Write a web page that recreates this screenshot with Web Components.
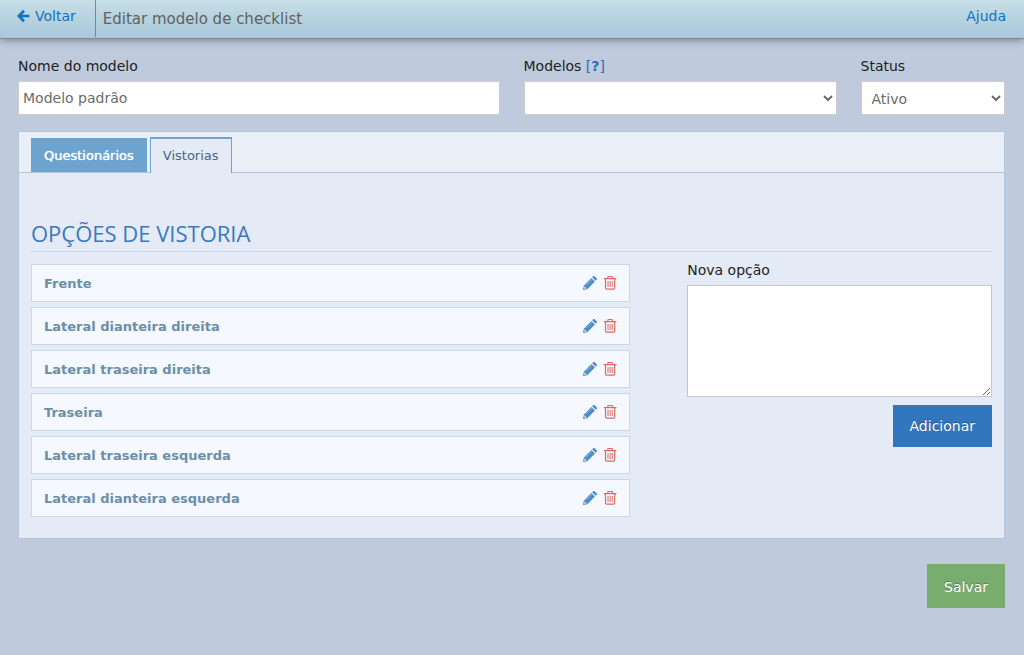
<!DOCTYPE html>
<html lang="pt-BR">
<head>
<meta charset="utf-8">
<title>Editar modelo de checklist</title>
<style>
  html { min-height: 100%; background: #bfcbdd; }
  body { margin: 0; font: 14px/20px "DejaVu Sans", Verdana, sans-serif; color: #222; }
</style>
</head>
<body>
<checklist-page></checklist-page>

<template id="t-topbar">
  <style>
    :host { display: flex; height: 38px; border-bottom: 1px solid #83898d; background: linear-gradient(#c8dee8, #b4d1de 55%, #a9c8da); box-shadow: 0 1px 8px rgba(0,0,0,.4); }
    a { color: #1271c2; text-decoration: none; line-height: 20px; padding: 6px 18px; }
    .back { display: flex; gap: 5px; padding: 6px 19px 6px 17px; border-right: 1px solid #7d878c; height: 25px; }
    svg { width: 13px; height: 20px; }
    h1 { margin: 0; flex: 1; font-size: 15px; font-weight: 400; line-height: 38px; color: #616161; padding-left: 7px; }
  </style>
  <a class="back" href="#voltar"><svg viewBox="0 0 13 20" aria-hidden="true"><path d="M7 4.8 1.9 10 7 15.2M2.2 10h10.3" fill="none" stroke="#1271c2" stroke-width="2.7"/></svg><span>Voltar</span></a>
  <h1><slot></slot></h1>
  <a href="#ajuda">Ajuda</a>
</template>

<template id="t-fields">
  <style>
    :host { display: grid; grid-template-columns: repeat(12, 1fr); column-gap: 24px; }
    div:nth-of-type(1) { grid-column: span 6; }
    div:nth-of-type(2) { grid-column: span 4; }
    div:nth-of-type(3) { grid-column: span 2; }
    .l { display: block; line-height: 20px; margin-bottom: 5px; }
    a { color: #2a6db8; text-decoration: none; }
    input, select { box-sizing: border-box; display: block; width: 100%; height: 34px; border: 1px solid #ccc; border-radius: 0; background: #fff; color: #6b6b6b; font: inherit; margin: 0; outline: 0; }
    input { padding: 0 4px; }
    select { padding: 1px 0 0 6px; }
  </style>
  <div><label class="l" for="nome">Nome do modelo</label><input id="nome" value="Modelo padrão"></div>
  <div><span class="l"><label for="modelos">Modelos</label> <a href="#modelos">[<b>?</b>]</a></span><select id="modelos"><option></option></select></div>
  <div><label class="l" for="status">Status</label><select id="status"><option>Ativo</option><option>Inativo</option></select></div>
</template>

<template id="t-tabs">
  <style>
    :host { display: block; border: 1px solid #b4c5d8; background: #e4ebf6; }
    nav { display: flex; gap: 3px; padding: 5px 12px 0; background: #eaeff7; box-shadow: inset 0 -1px #b4c5d8; }
    button { box-sizing: border-box; height: 36px; font: 13px/20px "DejaVu Sans", Verdana, sans-serif; border: 1px solid #6da3cf; border-top-width: 2px; border-bottom: 0; background: #e4ebf6; color: #4b6584; padding: 0 12px; }
    .off { height: 34px; margin-top: 1px; color: #fff; background: #6da3cf; border-top-width: 1px; text-shadow: 0 0 1px #fff; }
    section { padding: 46px 12px 21px; }
  </style>
  <nav role="tablist"><button class="off" role="tab">Questionários</button><button role="tab" aria-selected="true">Vistorias</button></nav>
  <section role="tabpanel"><slot></slot></section>
</template>

<template id="t-option">
  <style>
    :host { display: flex; align-items: center; gap: 6px; box-sizing: border-box; height: 38px; padding: 0 12px; border: 1px solid #cdd8e7; background: #f5f8ff; color: #6b8fa7; font-size: 13px; font-weight: 700; }
    span { flex: 1; padding-top: 2px; }
    button { display: block; border: 0; background: none; padding: 0; height: 16px; }
    svg { display: block; width: 14px; height: 16px; }
  </style>
  <span><slot></slot></span>
  <button aria-label="Editar"><svg viewBox="0 0 14 16"><path d="m0 15 .8-4.3L8.4 3l3.5 3.5-7.6 7.7z" fill="#4b8dcb"/><path d="m9.1 2.3 1-1q.8-.7 1.6 0l1.9 1.9q.7.8 0 1.6l-1 1z" fill="#4b8dcb"/><path d="m1.7 11.6 1.8 1.8-1.7.4-.5-.6zM3.3 10 9 4.3" fill="#f5f8ff" stroke="#a9c9e8" stroke-width=".7"/></svg></button>
  <button aria-label="Excluir"><svg viewBox="0 0 14 16" fill="none" stroke="#dc6a62"><path d="M.8 3.6h12.6M4.8 3.4V2.3q0-.8.8-.8h3q.8 0 .8.8v1.1M2.5 4v8.9q0 1.2 1.2 1.2h6.8q1.2 0 1.2-1.2V4" stroke-width="1.2"/><path d="M5 6v6M7.1 6v6M9.2 6v6" stroke-width="1"/></svg></button>
</template>

<template id="t-form">
  <style>
    :host { display: flex; flex-direction: column; }
    label { line-height: 20px; margin: -4px 0 5px; }
    textarea { box-sizing: border-box; width: 100%; height: 112px; border: 1px solid #c3c6ca; border-radius: 0; margin: 0 0 8px; padding: 6px; background: #fff; font: inherit; }
  </style>
  <label for="nova">Nova opção</label>
  <textarea id="nova"></textarea>
  <action-button>Adicionar</action-button>
</template>

<template id="t-button">
  <style>
    :host { display: flex; justify-content: flex-end; }
    button { font: inherit; color: #fff; border: 0; padding: 11px 17px; background: var(--fill, #3276be); text-shadow: 0 -1px 1px rgba(0,0,0,.3); }
    :host([kind="save"]) button { padding: 13px 17px 11px; }
  </style>
  <button type="button"><slot></slot></button>
</template>

<template id="t-page">
  <style>
    :host { display: block; }
    main { padding: 17px 19px 24px 18px; }
    tab-panel { margin-top: 16px; }
    h2 { margin: 0 0 12px; padding-bottom: 4px; border-bottom: 1px solid #c9d9e9; color: #3a79c0; font: 22px/28px "Open Sans", sans-serif; }
    .cols { display: grid; grid-template-columns: 59fr 30fr; column-gap: 57px; }
    ul { list-style: none; margin: 0; padding: 0; display: grid; gap: 5px; }
    .save { margin-top: 25px; --fill: #79ad6f; }
  </style>
  <top-bar>Editar modelo de checklist</top-bar>
  <main>
    <model-fields></model-fields>
    <tab-panel>
      <h2>OPÇÕES DE VISTORIA</h2>
      <div class="cols">
        <ul>
          <li><option-row>Frente</option-row></li>
          <li><option-row>Lateral dianteira direita</option-row></li>
          <li><option-row>Lateral traseira direita</option-row></li>
          <li><option-row>Traseira</option-row></li>
          <li><option-row>Lateral traseira esquerda</option-row></li>
          <li><option-row>Lateral dianteira esquerda</option-row></li>
        </ul>
        <option-form></option-form>
      </div>
    </tab-panel>
    <action-button class="save" kind="save">Salvar</action-button>
  </main>
</template>

<script>
  const define = (name, id) => customElements.define(name, class extends HTMLElement {
    constructor() {
      super();
      this.attachShadow({ mode: "open" }).append(document.getElementById(id).content.cloneNode(true));
    }
  });
  define("top-bar", "t-topbar");
  define("model-fields", "t-fields");
  define("tab-panel", "t-tabs");
  define("option-row", "t-option");
  define("action-button", "t-button");
  define("option-form", "t-form");
  define("checklist-page", "t-page");
</script>
</body>
</html>
